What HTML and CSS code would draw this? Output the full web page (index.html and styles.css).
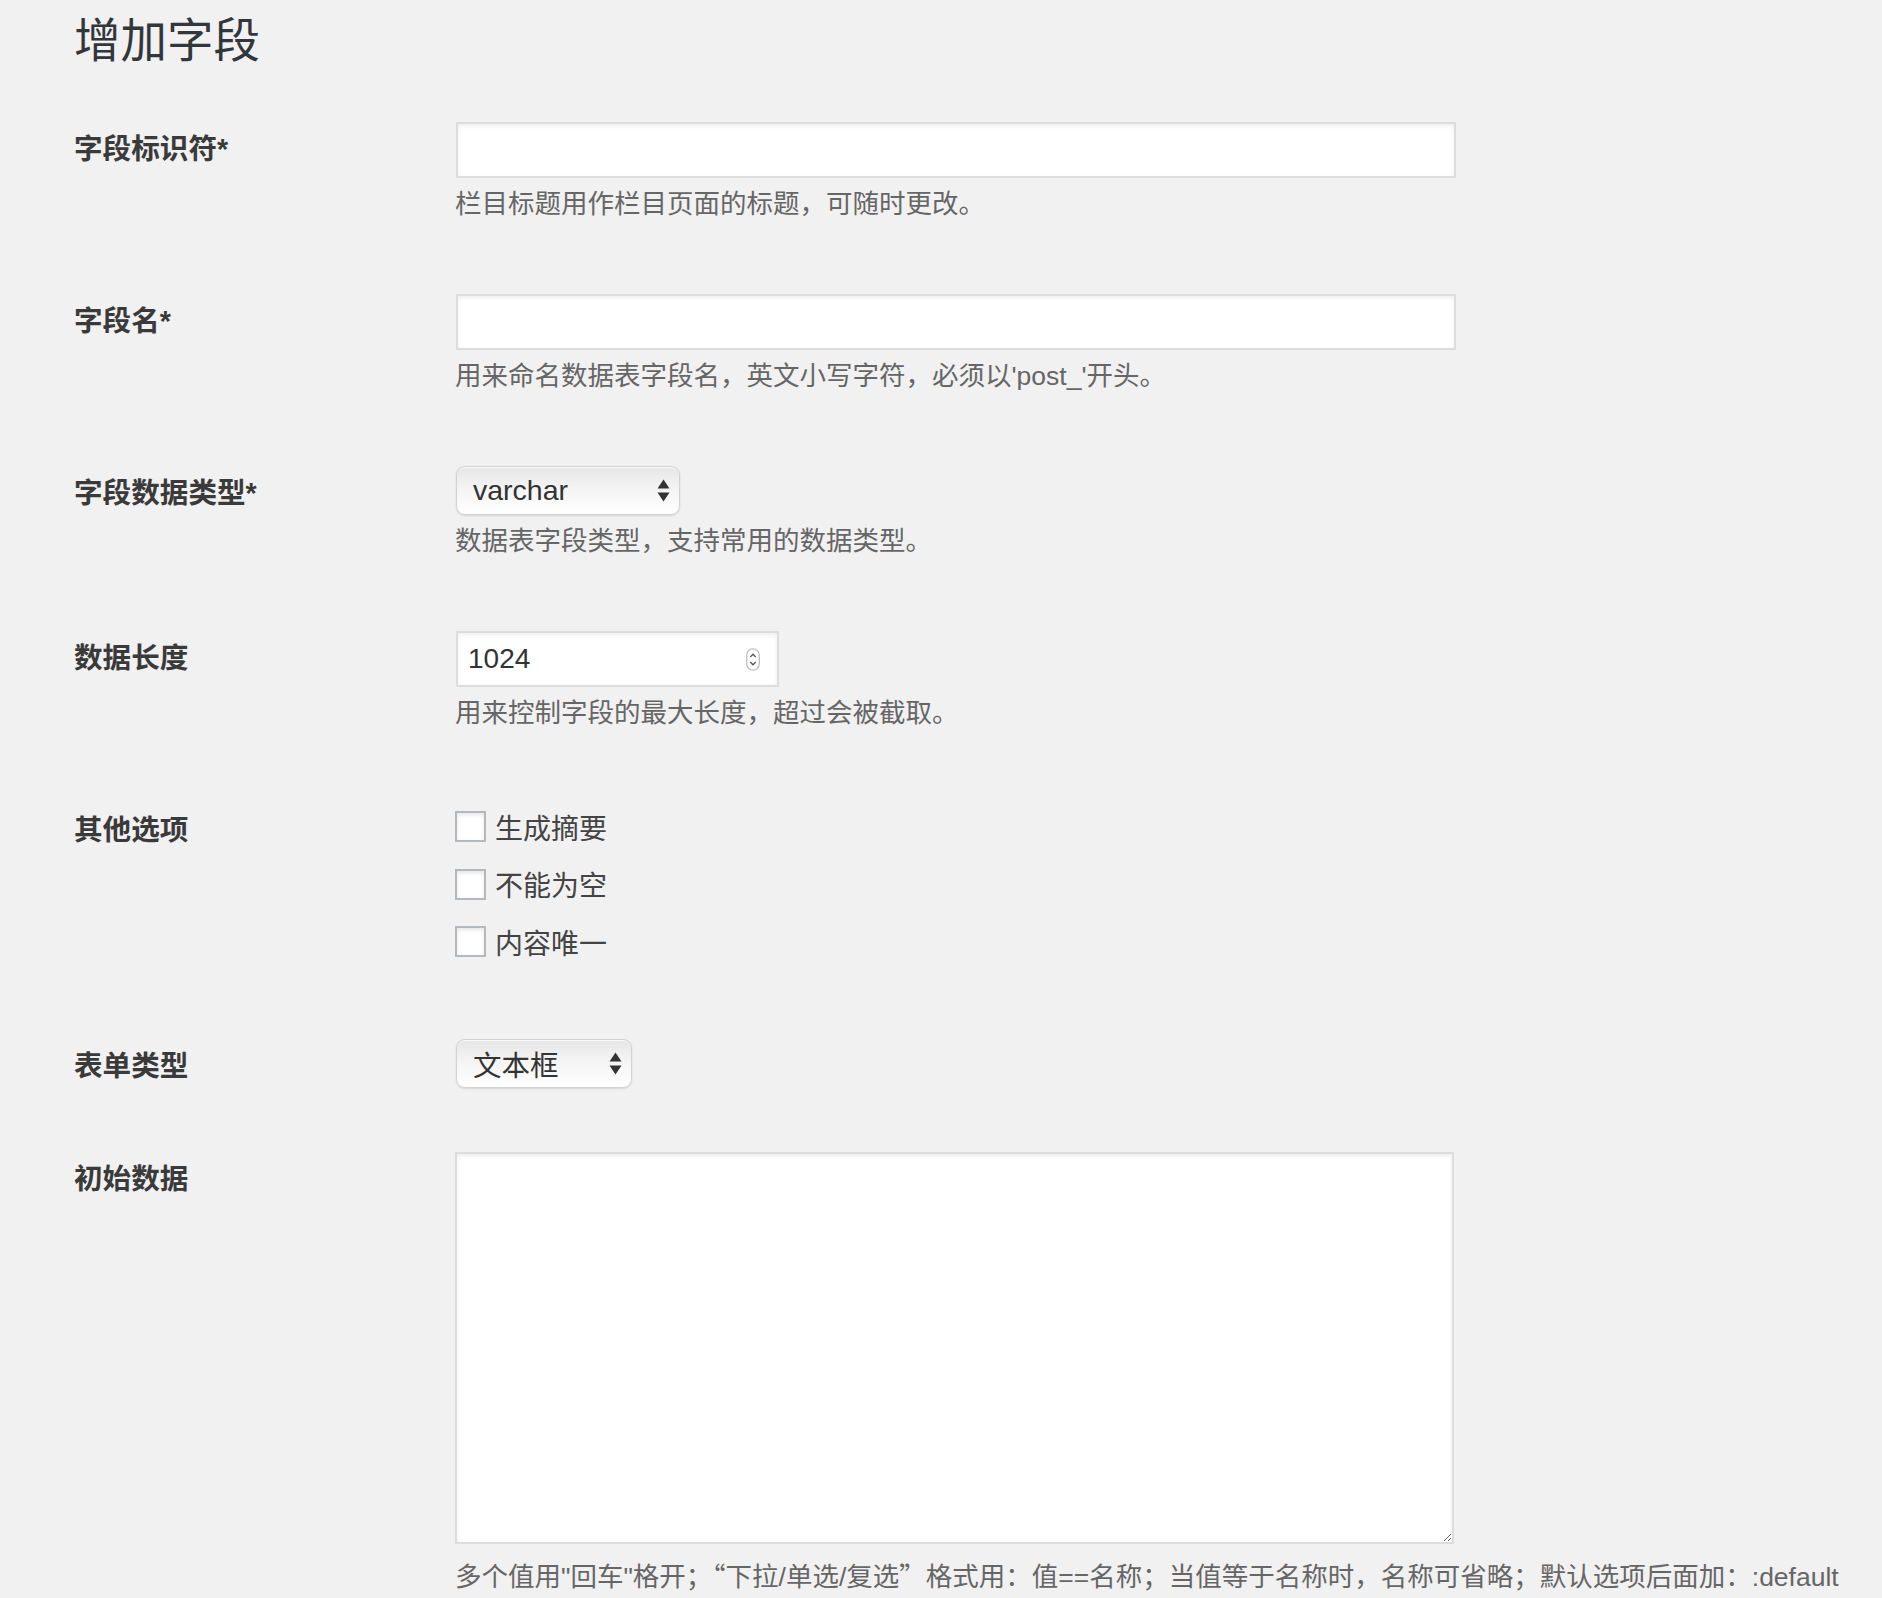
FILE: index.html
```html
<!DOCTYPE html>
<html lang="zh-CN">
<head>
<meta charset="utf-8">
<title>增加字段</title>
<link rel="stylesheet" href="styles.css">
</head>
<body>
<div class="wrap">
  <h1 class="page-title">增加字段</h1>
  <div class="form">
    <div class="row">
      <div class="label">字段标识符*</div>
      <div class="field">
        <input class="text-input" type="text">
        <p class="desc">栏目标题用作栏目页面的标题，可随时更改。</p>
      </div>
    </div>
    <div class="row">
      <div class="label">字段名*</div>
      <div class="field">
        <input class="text-input" type="text">
        <p class="desc">用来命名数据表字段名，英文小写字符，必须以'post_'开头。</p>
      </div>
    </div>
    <div class="row">
      <div class="label">字段数据类型*</div>
      <div class="field">
        <div class="select select-type">
          <span class="select-value">varchar</span>
          <svg class="select-arrows" width="13" height="23" viewBox="0 0 13 23"><path d="M6.5 0.5 L12.5 9.5 L0.5 9.5 Z M0.5 13.5 L12.5 13.5 L6.5 22.5 Z" fill="#333"/></svg>
        </div>
        <p class="desc">数据表字段类型，支持常用的数据类型。</p>
      </div>
    </div>
    <div class="row">
      <div class="label">数据长度</div>
      <div class="field">
        <div class="num-input">
          <span class="num-value">1024</span>
          <svg class="spinner" width="14" height="23" viewBox="0 0 14 23"><rect x="0.75" y="0.75" width="12.5" height="21.5" rx="6.25" fill="#fff" stroke="#b9b9b9" stroke-width="1.2"/><polyline points="4.3,9 7,6.2 9.7,9" fill="none" stroke="#555" stroke-width="1.3"/><polyline points="4.3,14 7,16.8 9.7,14" fill="none" stroke="#555" stroke-width="1.3"/></svg>
        </div>
        <p class="desc">用来控制字段的最大长度，超过会被截取。</p>
      </div>
    </div>
    <div class="row row-options">
      <div class="label">其他选项</div>
      <div class="field">
        <div class="options">
          <label class="opt"><span class="cb"></span>生成摘要</label>
          <label class="opt"><span class="cb"></span>不能为空</label>
          <label class="opt"><span class="cb"></span>内容唯一</label>
        </div>
      </div>
    </div>
    <div class="row row-form-type">
      <div class="label">表单类型</div>
      <div class="field">
        <div class="select select-form">
          <span class="select-value">文本框</span>
          <svg class="select-arrows" width="13" height="23" viewBox="0 0 13 23"><path d="M6.5 0.5 L12.5 9.5 L0.5 9.5 Z M0.5 13.5 L12.5 13.5 L6.5 22.5 Z" fill="#333"/></svg>
        </div>
      </div>
    </div>
    <div class="row row-last">
      <div class="label">初始数据</div>
      <div class="field">
        <textarea class="textarea"></textarea>
        <p class="desc desc-last">多个值用"回车"格开；<span class="cjk">“</span>下拉/单选/复选<span class="cjk">”</span>格式用：值==名称；当值等于名称时，名称可省略；默认选项后面加：:default</p>
      </div>
    </div>
  </div>
</div>
</body>
</html>
```

FILE: styles.css
```css
* { box-sizing: border-box; }

html, body {
  margin: 0;
  background: #f1f1f1;
  overflow: hidden;
}

body {
  font-family: "Liberation Sans", "Noto Sans CJK SC", sans-serif;
  color: #444;
}

.wrap {
  padding: 11px 0 0 74px;
}

.page-title {
  margin: 0 0 20px;
  font-size: 46.5px;
  line-height: 60px;
  font-weight: 400;
  color: #32373c;
}

.row {
  display: grid;
  grid-template-columns: 381px 1fr;
  padding: 30px 0;
}

.label {
  padding-top: 10px;
  font-size: 28.6px;
  line-height: 36px;
  font-weight: 700;
  color: #3a3a3a;
}

.field {
  min-width: 0;
}

.text-input {
  display: block;
  width: 1000px;
  height: 56px;
  margin: 1px;
  border: 2px solid #ddd;
  background: #fff;
  box-shadow: inset 0 2px 4px rgba(0, 0, 0, 0.07);
  outline: none;
}

.desc {
  margin: 8px 0 11px;
  font-size: 26.5px;
  line-height: 36px;
  color: #666;
}

.cjk {
  font-family: "Noto Sans CJK SC", sans-serif;
}

.select {
  display: flex;
  align-items: center;
  justify-content: space-between;
  height: 49px;
  margin: 1px;
  padding: 0 9px 0 16px;
  border: 1px solid #d2d2d2;
  border-radius: 9px;
  background: linear-gradient(#e6e6e6 0%, #f4f4f4 45%, #ffffff 100%);
  box-shadow: 0 1px 2px rgba(0, 0, 0, 0.12), inset 0 1px 0 rgba(255, 255, 255, 0.8);
  font-size: 28.5px;
  color: #333;
}

.select-type { width: 224px; }
.select-form { width: 176px; }

.select-arrows { flex: none; }

.num-input {
  display: flex;
  align-items: center;
  justify-content: space-between;
  width: 323px;
  height: 56px;
  margin: 1px;
  padding: 0 17px 0 10px;
  border: 2px solid #ddd;
  background: #fff;
  box-shadow: inset 0 2px 4px rgba(0, 0, 0, 0.07);
  font-size: 28px;
  color: #333;
}

.spinner { flex: none; }

.options {
  margin: -4px 0 7px;
}

.opt {
  display: flex;
  align-items: center;
  height: 57.5px;
  font-size: 28px;
  color: #444;
}

.cb {
  width: 31px;
  height: 31px;
  margin-right: 9px;
  border: 2px solid #b4b9be;
  background: #fff;
  box-shadow: inset 0 2px 4px rgba(0, 0, 0, 0.1);
}

.row-form-type {
  padding-bottom: 32px;
}

.row-last {
  padding-bottom: 0;
}

.textarea {
  display: block;
  width: 999px;
  height: 392px;
  margin: 1px 0 0;
  border: 2px solid #ddd;
  background: #fff;
  box-shadow: inset 0 2px 4px rgba(0, 0, 0, 0.07);
  outline: none;
  resize: both;
}

.desc-last {
  margin: 13px 0 0;
  white-space: nowrap;
}
```
